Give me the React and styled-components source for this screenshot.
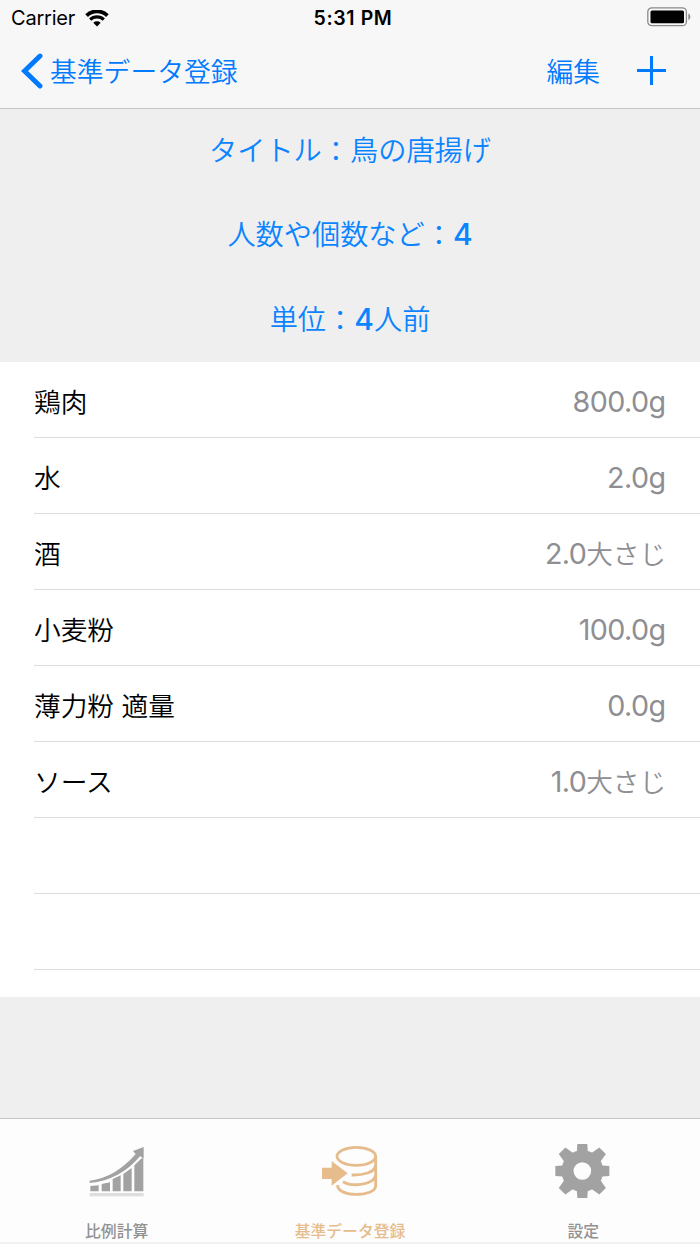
import React from 'react';
import styled, { createGlobalStyle } from 'styled-components';

const GlobalStyle = createGlobalStyle`
  body {
    margin: 0;
    background: #efefef;
    font-family: Inter, "Noto Sans CJK JP", sans-serif;
    -webkit-font-smoothing: antialiased;
  }
`;

const Screen = styled.div`
  width: 700px;
  height: 1244px;
  display: flex;
  flex-direction: column;
  overflow: hidden;
  background: #efefef;
`;

const Header = styled.header`
  height: 108px;
  flex: none;
  background: #f7f7f7;
  border-bottom: 1px solid #c4c4c5;
`;

const StatusBar = styled.div`
  height: 36px;
  padding: 0 9px 0 11px;
  display: grid;
  grid-template-columns: 1fr auto 1fr;
  align-items: center;
  font-size: 20px;
  line-height: 36px;
  color: #000;
`;

const Carrier = styled.div`
  display: flex;
  align-items: center;
  gap: 10px;
  letter-spacing: -0.2px;
`;

const Clock = styled.div`
  font-weight: 600;
  font-size: 19.5px;
  letter-spacing: 0.6px;
  padding-left: 4px;
`;

const Battery = styled.svg`
  justify-self: end;
  display: block;
  margin-bottom: 2px;
`;

const NavBar = styled.nav`
  height: 70px;
  display: flex;
  align-items: center;
  justify-content: space-between;
  padding: 0 33px 0 21px;
`;

const NavButton = styled.button`
  display: flex;
  align-items: center;
  gap: ${props => props.$gap || 0}px;
  padding: 0;
  border: 0;
  background: none;
  color: #007aff;
  font-family: inherit;
  font-size: 26.8px;
  font-weight: 350;
  line-height: 40px;
`;

const NavText = styled.span`
  padding-top: 2px;
`;

const NavActions = styled.div`
  display: flex;
  align-items: center;
  gap: 37px;
`;

const FieldList = styled.section`
  height: 253px;
  flex: none;
  display: flex;
  flex-direction: column;
  align-items: center;
`;

const Field = styled.button`
  height: 84.5px;
  padding: 0;
  border: 0;
  background: none;
  color: #0a84ff;
  font-family: inherit;
  font-size: 28.2px;
  font-weight: 350;
  line-height: 84px;
  white-space: nowrap;
`;

const Colon = styled.span`
  line-height: 1;
  vertical-align: -1px;
`;

const FieldNumber = styled.span`
  font-size: 30px;
  font-weight: 450;
  line-height: 1;
`;

const Table = styled.section`
  height: 635px;
  flex: none;
  overflow: hidden;
  background: #fff;
`;

const Row = styled.div`
  height: 75px;
  margin-left: 34px;
  padding-right: 34px;
  display: flex;
  align-items: center;
  justify-content: space-between;
  border-bottom: 1px solid #dcdcde;
  line-height: 40px;
`;

const RowName = styled.span`
  font-size: 26.7px;
  font-weight: 350;
  color: #000;
  padding-top: 4px;
`;

const RowAmount = styled.span`
  font-size: 28.7px;
  letter-spacing: -0.6px;
  color: #8e8e93;
  padding-top: 5px;
`;

const RowUnit = styled.span`
  font-size: ${props => (props.$kana ? '26.6px' : 'inherit')};
  font-weight: ${props => (props.$kana ? 350 : 400)};
  letter-spacing: 0;
`;

const Spacer = styled.div`
  flex: 1;
`;

const TabBar = styled.footer`
  height: 123px;
  flex: none;
  display: grid;
  grid-template-columns: repeat(3, 1fr);
  background: #fdfdfd;
  border-top: 1px solid #c6c6c6;
  border-bottom: 2px solid #f1f1f1;
`;

const Tab = styled.div`
  display: flex;
  flex-direction: column;
  align-items: center;
  padding-top: 24px;
  color: ${props => (props.$active ? '#e6bc8c' : '#a2a2a2')};
`;

const TabLabel = styled.span`
  margin-top: 21px;
  font-size: 15.8px;
  font-weight: 500;
  line-height: 24px;
  color: ${props => (props.$active ? '#e6bc8c' : '#929292')};
`;

const WifiIcon = () => (
  <svg width="24" height="17" viewBox="0 0 24 17">
    <path d="M1.6 5.6a15 15 0 0 1 20.8 0" fill="none" stroke="#000" strokeWidth="3.9" />
    <path d="M5.2 9.7a9.6 9.6 0 0 1 13.6 0" fill="none" stroke="#000" strokeWidth="3.1" />
    <path d="M12 16.4L8.3 12.8a5.4 5.4 0 0 1 7.4 0z" />
  </svg>
);

const BatteryIcon = () => (
  <Battery width="44" height="20" viewBox="0 0 44 20">
    <rect x="0.8" y="0.9" width="38.6" height="17.8" rx="4" fill="none" stroke="#8b8b8b" strokeWidth="1.3" />
    <rect x="3.5" y="3.5" width="33.5" height="12.8" rx="1.6" />
    <path d="M41.3 6.6c2.7 1.2 2.7 5.4 0 6.6z" fill="#8b8b8b" />
  </Battery>
);

const BackIcon = () => (
  <svg width="22" height="36" viewBox="0 0 22 36">
    <path d="M19 3L3.5 18L19 33" fill="none" stroke="#007aff" strokeWidth="4.9" strokeLinecap="round" />
  </svg>
);

const PlusIcon = () => (
  <svg width="30" height="30" viewBox="0 0 30 30">
    <path d="M14.5 0v29M0 14.5h29" stroke="#007aff" strokeWidth="3" />
  </svg>
);

const ChartIcon = () => (
  <svg width="56" height="56" viewBox="56 84 168 168" fill="currentColor">
    <path d="M58 197C112 190 156 163 196 117L188 108L220 96V129L209 124C170 170 120 199 58 204z" />
    <path d="M60 213l25-2v18H60zM94 207l25-5v27H94zM127 192l24-11v48h-24zM159 177l25-18v70h-25zM192 151l27-26v104h-27z" />
    <rect x="58" y="234" width="162" height="10" fill="#dedede" />
  </svg>
);

const DatabaseIcon = () => (
  <svg width="56" height="56" viewBox="126 84 168 168" fill="none" stroke="currentColor" strokeWidth="8.5">
    <ellipse cx="229" cy="124" rx="58" ry="27" />
    <path d="M287 124V212C287 247 171 248 173 210M286 153C284 172 250 181 215 180M286 183C280 209 218 217 189 200" />
    <path d="M126 158h29v-20l48 37l-48 37v-20h-29z" fill="currentColor" stroke="none" />
  </svg>
);

const GearIcon = () => (
  <svg width="56" height="56" viewBox="76 84 168 168" fill="none" stroke="currentColor">
    <circle cx="158" cy="168" r="44.5" strokeWidth="36" />
    {[0, 45, 90, 135, 180, 225, 270, 315].map(angle => (
      <path
        key={angle}
        d={angle % 90 ? 'M144 82h28l6 36h-40z' : 'M143 87h30l2 32h-34z'}
        fill="currentColor"
        stroke="none"
        transform={`rotate(${angle} 158 168)`}
      />
    ))}
  </svg>
);

const ingredients = [
  { name: '鶏肉', amount: '800.0', unit: 'g' },
  { name: '水', amount: '2.0', unit: 'g' },
  { name: '酒', amount: '2.0', unit: '大さじ' },
  { name: '小麦粉', amount: '100.0', unit: 'g' },
  { name: '薄力粉 適量', amount: '0.0', unit: 'g' },
  { name: 'ソース', amount: '1.0', unit: '大さじ' },
];

const tabs = [
  { label: '比例計算', Icon: ChartIcon },
  { label: '基準データ登録', Icon: DatabaseIcon, active: true },
  { label: '設定', Icon: GearIcon },
];

const App = () => {
  return (
    <>
      <GlobalStyle />
      <Screen>
        <Header>
          <StatusBar>
            <Carrier>
              Carrier
              <WifiIcon />
            </Carrier>
            <Clock>5:31 PM</Clock>
            <BatteryIcon />
          </StatusBar>
          <NavBar>
            <NavButton $gap={7}>
              <BackIcon />
              <NavText>基準データ登録</NavText>
            </NavButton>
            <NavActions>
              <NavButton>
                <NavText>編集</NavText>
              </NavButton>
              <NavButton>
                <PlusIcon />
              </NavButton>
            </NavActions>
          </NavBar>
        </Header>
        <FieldList>
          <Field>タイトル<Colon>：</Colon>鳥の唐揚げ</Field>
          <Field>人数や個数など<Colon>：</Colon><FieldNumber>4</FieldNumber></Field>
          <Field>単位<Colon>：</Colon><FieldNumber>4</FieldNumber>人前</Field>
        </FieldList>
        <Table>
          {ingredients.map(item => (
            <Row key={item.name}>
              <RowName>{item.name}</RowName>
              <RowAmount>
                {item.amount}
                <RowUnit $kana={item.unit !== 'g'}>{item.unit}</RowUnit>
              </RowAmount>
            </Row>
          ))}
          {/* empty rows at the end of the list */}
          <Row />
          <Row />
        </Table>
        <Spacer />
        <TabBar>
          {tabs.map(({ label, Icon, active }) => (
            <Tab key={label} $active={active}>
              <Icon />
              <TabLabel $active={active}>{label}</TabLabel>
            </Tab>
          ))}
        </TabBar>
      </Screen>
    </>
  );
};

export default App;
